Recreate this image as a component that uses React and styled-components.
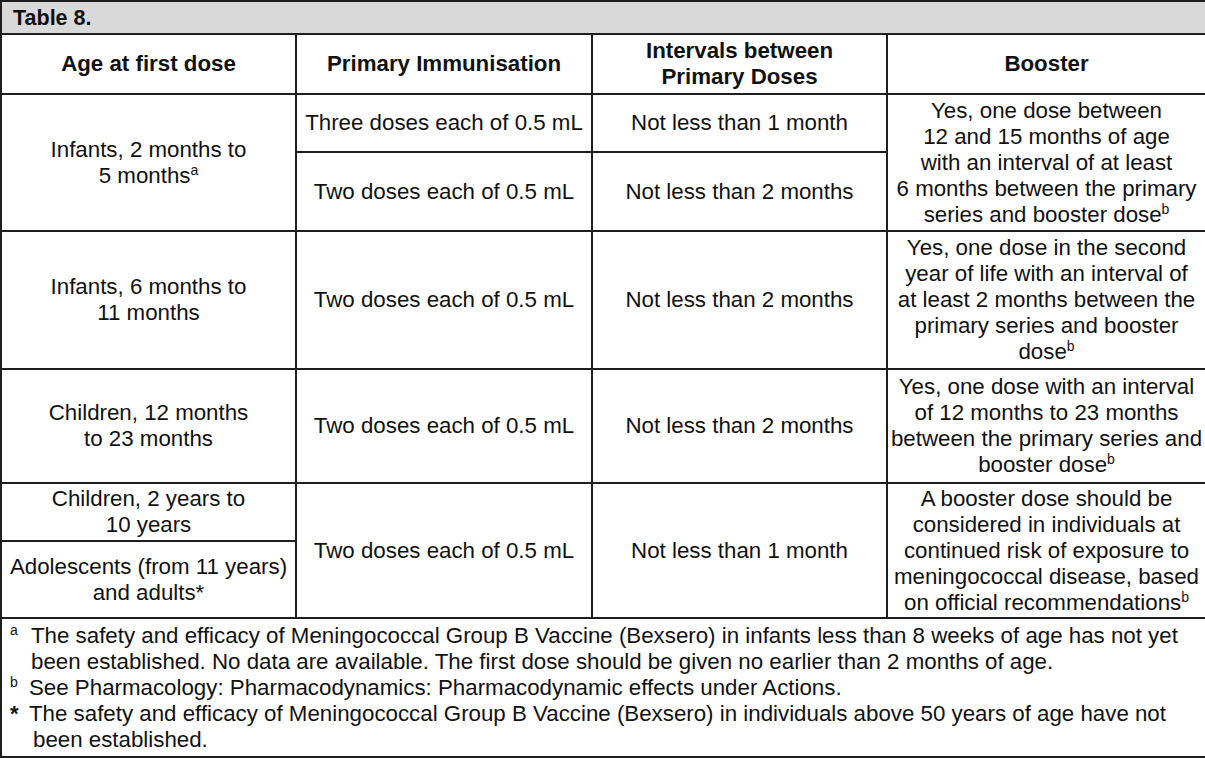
import React from 'react';
import styled, { createGlobalStyle } from 'styled-components';

const GlobalStyle = createGlobalStyle`
  html, body {
    margin: 0;
    padding: 0;
    background: #ffffff;
  }
  body {
    font-family: 'Liberation Sans', Arial, sans-serif;
    color: #111111;
  }
`;

const Sup = styled.sup`
  font-size: 14px;
  line-height: 0;
  vertical-align: 8px;
`;

const Table = styled.table`
  width: 1205px;
  height: 758px;
  border-collapse: collapse;
  table-layout: fixed;
  font-size: 22.3px;
  line-height: 26px;
`;

const TitleCell = styled.th`
  background: #d9d9d9;
  border: 2px solid #1e1e1e;
  text-align: left;
  font-size: 21.5px;
  font-weight: 700;
  padding: 0 11px;
  height: 31px;
`;

const Th = styled.th`
  border: 2px solid #1e1e1e;
  font-weight: 700;
  text-align: center;
  vertical-align: middle;
  padding: 0 4px;
`;

const Td = styled.td`
  border: 2px solid #1e1e1e;
  text-align: center;
  vertical-align: middle;
  padding: 0 ${(p) => (p.$tight ? 2 : 4)}px;
  white-space: nowrap;
`;

const Row = styled.tr`
  height: ${(p) => p.$h}px;
`;

const FootCell = styled.td`
  border: 2px solid #1e1e1e;
  padding: 4px 6px 0;
  vertical-align: top;
  text-align: left;
`;

const Note = styled.div`
  padding-left: ${(p) => p.$indent}px;
  line-height: 26px;
`;

const Lead = styled.span`
  margin-left: ${(p) => -p.$pull}px;
  display: inline-block;
  width: ${(p) => p.$width}px;
  padding-left: ${(p) => p.$inset}px;
  box-sizing: border-box;
  font-size: ${(p) => p.$size}px;
  font-weight: ${(p) => p.$weight || 400};
  vertical-align: ${(p) => p.$raise}px;
  line-height: 0;
`;

export default function App() {
  return (
    <>
      <GlobalStyle />
      <Table>
        <colgroup>
          <col style={{ width: 295 }} />
          <col style={{ width: 296 }} />
          <col style={{ width: 295 }} />
          <col style={{ width: 319 }} />
        </colgroup>
        <tbody>
          <tr>
            <TitleCell colSpan={4}>Table 8.</TitleCell>
          </tr>
          <Row $h={60}>
            <Th>Age at first dose</Th>
            <Th>Primary Immunisation</Th>
            <Th>Intervals between<br />Primary Doses</Th>
            <Th>Booster</Th>
          </Row>

          <Row $h={58}>
            <Td rowSpan={2}>Infants, 2 months to<br />5 months<Sup>a</Sup></Td>
            <Td $tight>Three doses each of 0.5 mL</Td>
            <Td>Not less than 1 month</Td>
            <Td rowSpan={2} $tight>
              Yes, one dose between<br />12 and 15 months of age<br />with an interval of at least<br />
              6 months between the primary<br />series and booster dose<Sup>b</Sup>
            </Td>
          </Row>
          <Row $h={79}>
            <Td $tight>Two doses each of 0.5 mL</Td>
            <Td>Not less than 2 months</Td>
          </Row>

          <Row $h={138}>
            <Td>Infants, 6 months to<br />11 months</Td>
            <Td $tight>Two doses each of 0.5 mL</Td>
            <Td>Not less than 2 months</Td>
            <Td $tight>
              Yes, one dose in the second<br />year of life with an interval of<br />at least 2 months between the<br />
              primary series and booster<br />dose<Sup>b</Sup>
            </Td>
          </Row>

          <Row $h={114}>
            <Td>Children, 12 months<br />to 23 months</Td>
            <Td $tight>Two doses each of 0.5 mL</Td>
            <Td>Not less than 2 months</Td>
            <Td $tight>
              Yes, one dose with an interval<br />of 12 months to 23 months<br />between the primary series and<br />
              booster dose<Sup>b</Sup>
            </Td>
          </Row>

          <Row $h={58}>
            <Td>Children, 2 years to<br />10 years</Td>
            <Td rowSpan={2} $tight>Two doses each of 0.5 mL</Td>
            <Td rowSpan={2}>Not less than 1 month</Td>
            <Td rowSpan={2} $tight>
              A booster dose should be<br />considered in individuals at<br />continued risk of exposure to<br />
              meningococcal disease, based<br />on official recommendations<Sup>b</Sup>
            </Td>
          </Row>
          <Row $h={77}>
            <Td $tight>Adolescents (from 11 years)<br />and adults*</Td>
          </Row>

          <tr>
            <FootCell colSpan={4}>
              <Note $indent={23}>
                <Lead $pull={23} $width={23} $inset={2} $size={14} $raise={8}>a</Lead>
                The safety and efficacy of Meningococcal Group B Vaccine (Bexsero) in infants less than 8 weeks of age has not yet
                been established. No data are available. The first dose should be given no earlier than 2 months of age.
              </Note>
              <Note $indent={23}>
                <Lead $pull={23} $width={21} $inset={2} $size={14} $raise={8}>b</Lead>
                See Pharmacology: Pharmacodynamics: Pharmacodynamic effects under Actions.
              </Note>
              <Note $indent={25}>
                <Lead $pull={25} $width={21} $inset={2} $size={22} $weight={700} $raise={0}>*</Lead>
                The safety and efficacy of Meningococcal Group B Vaccine (Bexsero) in individuals above 50 years of age have not
                been established.
              </Note>
            </FootCell>
          </tr>
        </tbody>
      </Table>
    </>
  );
}
